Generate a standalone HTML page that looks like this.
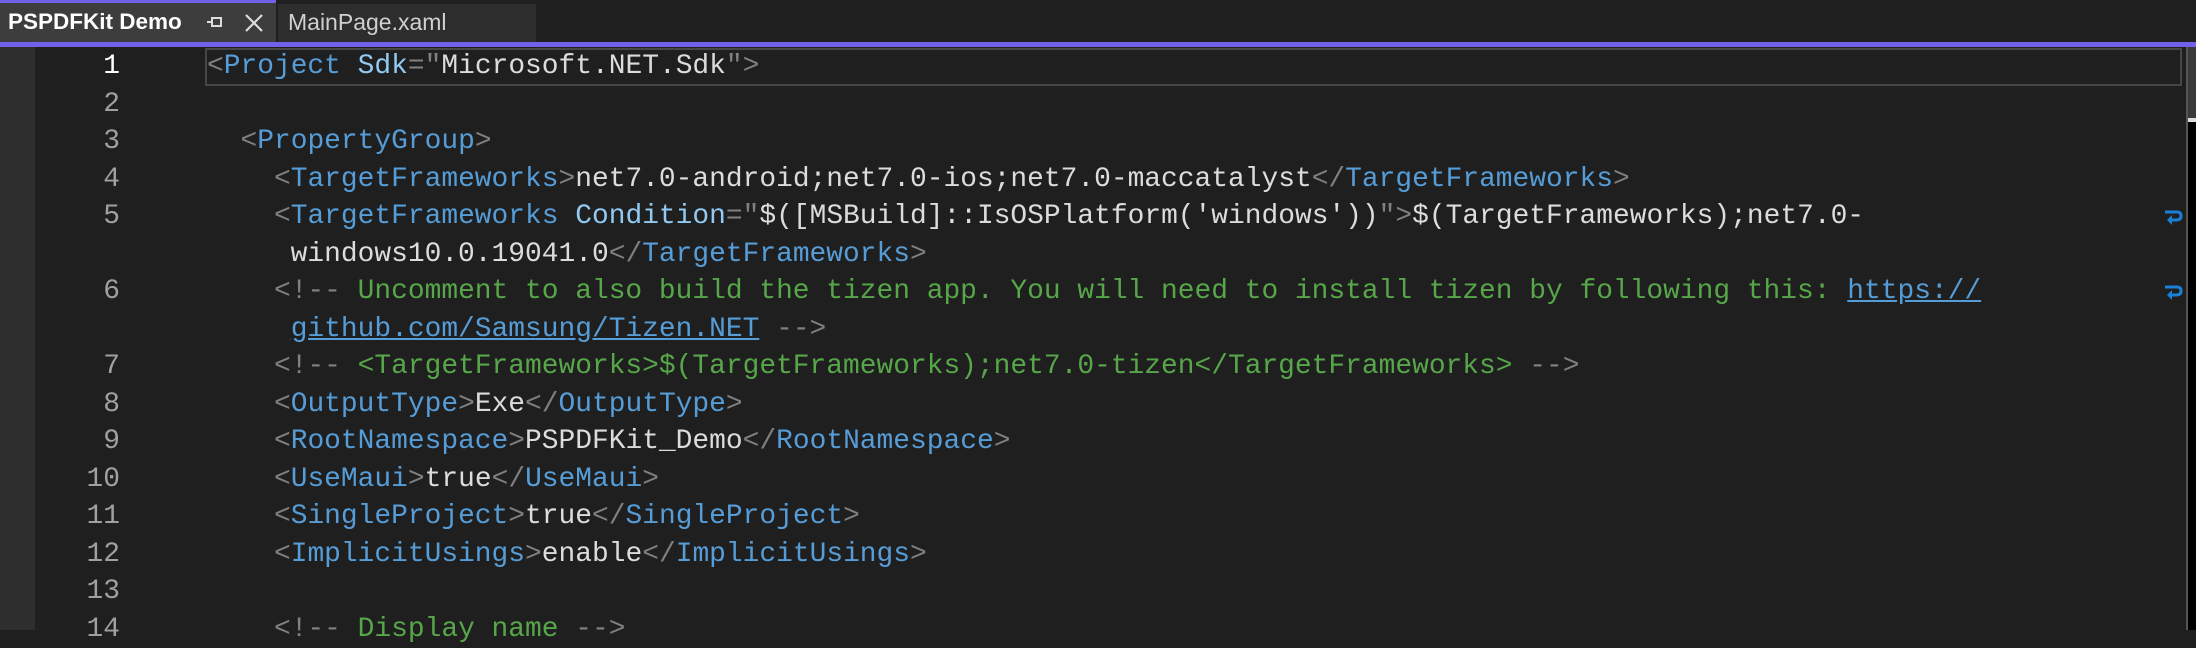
<!DOCTYPE html>
<html><head><meta charset="utf-8"><style>
html,body{margin:0;padding:0;width:2196px;height:630px;overflow:hidden;background:#1f1f1f}
.tabbar{position:absolute;left:0;top:0;width:2196px;height:42px;background:#1f1f1f}
.tab1{position:absolute;left:0;top:0;width:276px;height:42px;background:#3d3d3d;border-top:3px solid #7160e8;box-sizing:border-box}
.tab1 span{position:absolute;left:8px;top:6px;font:bold 22.5px "Liberation Sans",sans-serif;color:#fff}
.tab2{position:absolute;left:278px;top:4px;width:258px;height:38px;background:#2d2d2d}
.tab2 span{position:absolute;left:10px;top:5px;font:23px "Liberation Sans",sans-serif;color:#d0d0d0}
.purple{position:absolute;left:0;top:42px;width:2196px;height:5px;background:#7160e8}
.gstrip{position:absolute;left:0;top:47px;width:35px;height:583px;background:#2e2e2e}
.cur{position:absolute;left:205px;top:48px;width:1973px;height:34px;border:2px solid #464646}
.sb{position:absolute;left:2186px;top:47px;width:10px;height:583px;background:#000;border-left:2px solid #555;box-sizing:border-box}
.sbt{position:absolute;left:2188px;top:47px;width:8px;height:71px;background:#3a3a3a}
.sbw{position:absolute;left:2188px;top:118px;width:8px;height:4px;background:#ddd}
.ln{position:absolute;left:40px;width:80px;text-align:right;font:27.9px "Liberation Mono",monospace;color:#a0a0a0;line-height:37.5px}
.code{position:absolute;left:207px;white-space:pre;font:27.9px "Liberation Mono",monospace;color:#dcdcdc;line-height:37.5px}
.b{color:#808080}.t{color:#569cd6}.a{color:#92caf4}.c{color:#57a64a}.u{color:#569cd6;text-decoration:underline}
.w{position:absolute;left:2163px;width:20px;height:18px}
</style></head><body>
<div class="tabbar"></div>
<div class="tab1"><span>PSPDFKit Demo</span>
<svg style="position:absolute;left:206px;top:11px" width="18" height="16" viewBox="0 0 18 16"><path d="M1 8H6M6 3V13M6 4H15V12H6" stroke="#ddd" stroke-width="2" fill="none"/></svg>
<svg style="position:absolute;left:244px;top:10px" width="20" height="20" viewBox="0 0 20 20"><path d="M2 2L18 18M18 2L2 18" stroke="#ddd" stroke-width="2.2"/></svg>
</div>
<div class="tab2"><span>MainPage.xaml</span></div>
<div class="purple"></div>
<div class="gstrip"></div>
<div class="cur"></div>
<div class="sb"></div><div class="sbt"></div><div class="sbw"></div>
<svg class="w" style="top:208px" viewBox="0 0 20 18"><path d="M2 4H14Q18 4 18 8Q18 12 13 12H7" stroke="#1a7fd6" stroke-width="3" fill="none"/><path d="M9 7L4 12L9 17Z" fill="#1a7fd6"/></svg>
<svg class="w" style="top:283px" viewBox="0 0 20 18"><path d="M2 4H14Q18 4 18 8Q18 12 13 12H7" stroke="#1a7fd6" stroke-width="3" fill="none"/><path d="M9 7L4 12L9 17Z" fill="#1a7fd6"/></svg>
<div class="ln" style="top:48px"><span style="color:#fff">1</span><br>2<br>3<br>4<br>5<br>&nbsp;<br>6<br>&nbsp;<br>7<br>8<br>9<br>10<br>11<br>12<br>13<br>14</div>
<div class="code" style="top:48px"><span class="b">&lt;</span><span class="t">Project</span> <span class="a">Sdk</span><span class="b">="</span>Microsoft.NET.Sdk<span class="b">"&gt;</span>

  <span class="b">&lt;</span><span class="t">PropertyGroup</span><span class="b">&gt;</span>
    <span class="b">&lt;</span><span class="t">TargetFrameworks</span><span class="b">&gt;</span>net7.0-android;net7.0-ios;net7.0-maccatalyst<span class="b">&lt;/</span><span class="t">TargetFrameworks</span><span class="b">&gt;</span>
    <span class="b">&lt;</span><span class="t">TargetFrameworks</span> <span class="a">Condition</span><span class="b">="</span>$([MSBuild]::IsOSPlatform('windows'))<span class="b">"&gt;</span>$(TargetFrameworks);net7.0-
     windows10.0.19041.0<span class="b">&lt;/</span><span class="t">TargetFrameworks</span><span class="b">&gt;</span>
    <span class="b">&lt;!--</span><span class="c"> Uncomment to also build the tizen app. You will need to install tizen by following this: </span><span class="u">https://</span>
     <span class="u">github.com/Samsung/Tizen.NET</span> <span class="b">--&gt;</span>
    <span class="b">&lt;!--</span><span class="c"> &lt;TargetFrameworks&gt;$(TargetFrameworks);net7.0-tizen&lt;/TargetFrameworks&gt; </span><span class="b">--&gt;</span>
    <span class="b">&lt;</span><span class="t">OutputType</span><span class="b">&gt;</span>Exe<span class="b">&lt;/</span><span class="t">OutputType</span><span class="b">&gt;</span>
    <span class="b">&lt;</span><span class="t">RootNamespace</span><span class="b">&gt;</span>PSPDFKit_Demo<span class="b">&lt;/</span><span class="t">RootNamespace</span><span class="b">&gt;</span>
    <span class="b">&lt;</span><span class="t">UseMaui</span><span class="b">&gt;</span>true<span class="b">&lt;/</span><span class="t">UseMaui</span><span class="b">&gt;</span>
    <span class="b">&lt;</span><span class="t">SingleProject</span><span class="b">&gt;</span>true<span class="b">&lt;/</span><span class="t">SingleProject</span><span class="b">&gt;</span>
    <span class="b">&lt;</span><span class="t">ImplicitUsings</span><span class="b">&gt;</span>enable<span class="b">&lt;/</span><span class="t">ImplicitUsings</span><span class="b">&gt;</span>

    <span class="b">&lt;!--</span><span class="c"> Display name </span><span class="b">--&gt;</span></div>
</body></html>
